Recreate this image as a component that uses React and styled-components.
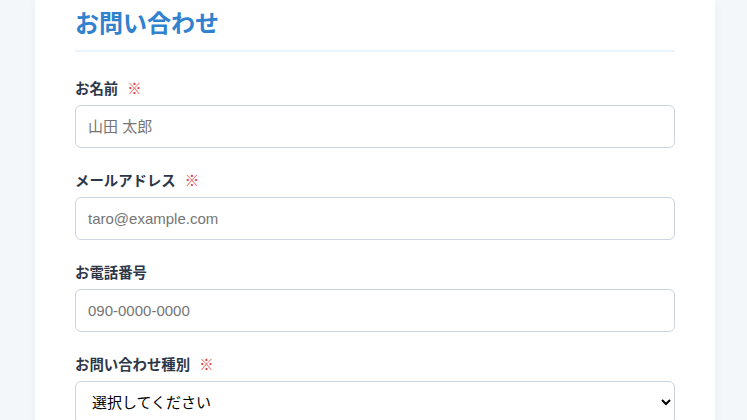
import styled, { createGlobalStyle } from "styled-components";

const GlobalStyle = createGlobalStyle`
    body {
        margin: 0;
        background: #f4f7fa;
        font-family: "Liberation Sans", "Noto Sans CJK JP", sans-serif;
        color: #2d3748;
    }
`

const fields = [
    { label: "お名前", required: true, type: "text", placeholder: "山田 太郎" },
    { label: "メールアドレス", required: true, type: "email", placeholder: "taro@example.com" },
    { label: "お電話番号", required: false, type: "tel", placeholder: "090-0000-0000" },
];

export default function App() {
    return (
        <>
            <GlobalStyle />
            <Page>
                <Card>
                    <Title>お問い合わせ</Title>
                    {fields.map((f, i) => (
                        <Field key={i}>
                            <Label>
                                {f.label}
                                {f.required && <Required>※</Required>}
                            </Label>
                            <Input type={f.type} placeholder={f.placeholder} />
                        </Field>
                    ))}
                    <Field>
                        <Label>
                            お問い合わせ種別
                            <Required>※</Required>
                        </Label>
                        <Select defaultValue="">
                            <option value="">選択してください</option>
                            <option value="product">製品について</option>
                            <option value="other">その他</option>
                        </Select>
                    </Field>
                </Card>
            </Page>
        </>
    )
}

const Page = styled.div`
    display: flex;
    justify-content: center;
    padding-left: 3px;
    min-height: 420px;
`

const Card = styled.div`
    width: 680px;
    box-sizing: border-box;
    background: #ffffff;
    padding: 4px 40px 40px;
    box-shadow: 0 2px 10px rgba(0, 0, 0, 0.04);
`

const Title = styled.h1`
    margin: 0 0 25px;
    padding-bottom: 10px;
    font-family: "Noto Sans CJK JP", sans-serif;
    font-size: 24px;
    line-height: 36px;
    font-weight: 700;
    color: #3182ce;
    border-bottom: 2px solid #ebf4fc;
`

const Field = styled.div`
    margin-bottom: 21px;
`

const Label = styled.label`
    display: block;
    margin-bottom: 7px;
    font-family: "Noto Sans CJK JP", sans-serif;
    font-size: 14.4px;
    line-height: 21px;
    font-weight: 700;
    color: #2d3748;
`

const Required = styled.span`
    margin-left: 9px;
    color: #e53e3e;
    font-weight: 400;
`

const Input = styled.input`
    display: block;
    width: 100%;
    height: 43px;
    box-sizing: border-box;
    padding: 10px 12px;
    border: 1px solid #cbd5e0;
    border-radius: 6px;
    font-family: "Liberation Sans", "Noto Sans CJK JP", sans-serif;
    font-size: 15px;
    color: #2d3748;
    background: #fff;
    &::placeholder {
        color: #757575;
    }
`

const Select = styled.select`
    display: block;
    width: 100%;
    height: 43px;
    box-sizing: border-box;
    padding: 10px 12px;
    border: 1px solid #cbd5e0;
    border-radius: 6px;
    font-family: "Liberation Sans", "Noto Sans CJK JP", sans-serif;
    font-size: 15px;
    color: #000;
    background: #fff;
`
